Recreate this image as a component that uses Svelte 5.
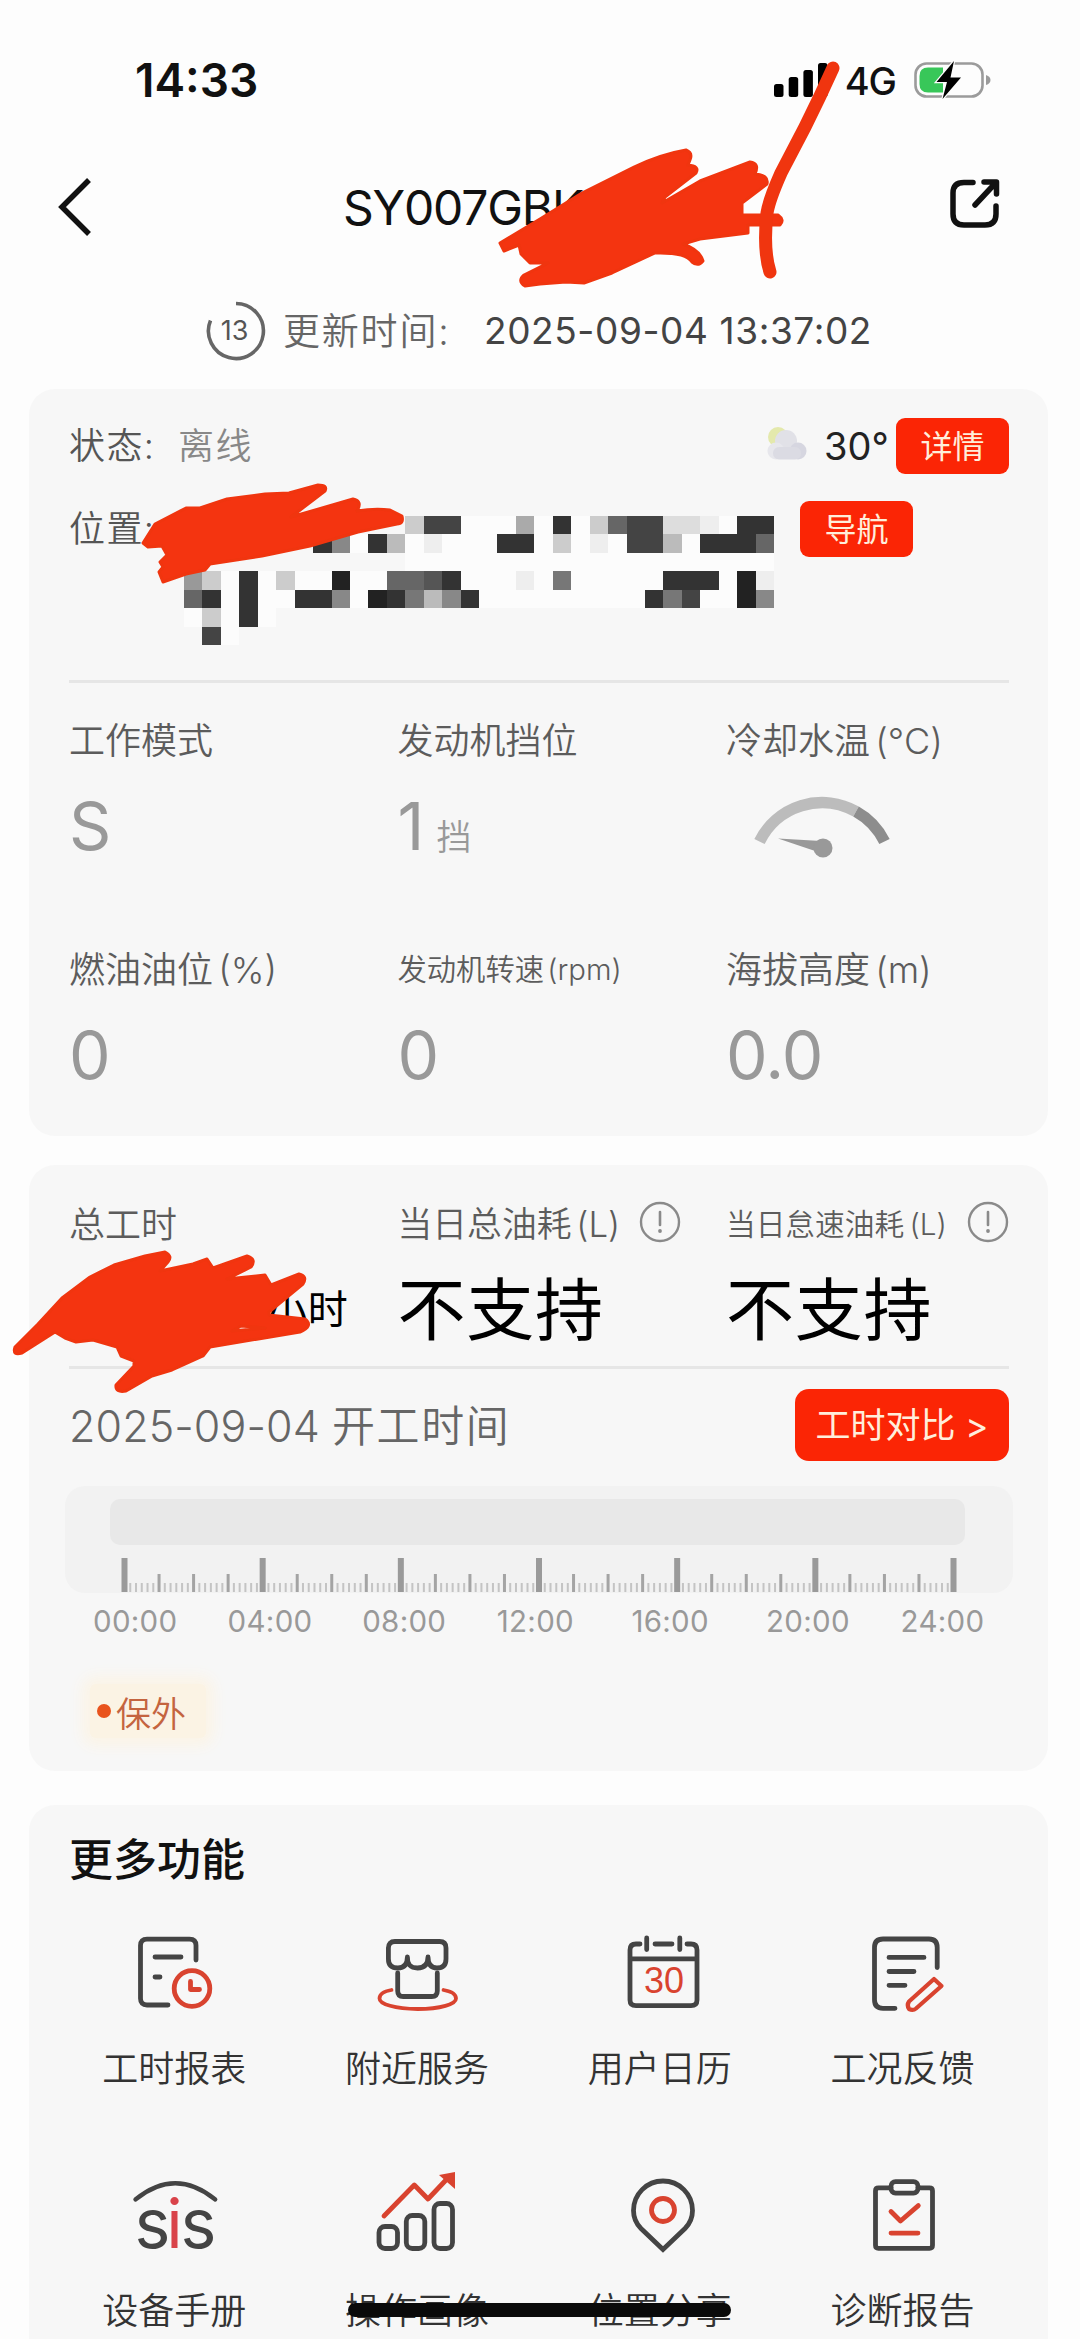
<script lang="ts">
	type Stat = { label: string; value?: string; unit?: string; small?: boolean; gauge?: boolean };

	const stats: Stat[] = [
		{ label: '工作模式', value: 'S' },
		{ label: '发动机挡位', value: '1', unit: '挡' },
		{ label: '冷却水温 (°C)', gauge: true },
		{ label: '燃油油位 (%)', value: '0' },
		{ label: '发动机转速 (rpm)', value: '0', small: true },
		{ label: '海拔高度 (m)', value: '0.0' }
	];

	const hours = ['00:00', '04:00', '08:00', '12:00', '16:00', '20:00', '24:00'];

	// one tick every ten minutes
	const ticks = Array.from({ length: 145 }, (_, i) => ({
		x: 59.5 + i * 5.757,
		size: i % 24 === 0 ? 'long' : i % 6 === 0 ? 'mid' : 'short'
	}));

	// masked address, one hex grey per cell
	const mosaic = [
		'............c44fffaf3fc644ddef33',
		'.......38f3bfefff33fcfef44bf3336',
		'............ffffffffffffffffffff',
		'9cf3fcff2ff6653fffef7fffff333f2e',
		'63f3ff338f237b83fffffffff374ff28',
		'fcf3f...........................',
		'.4f.............................'
	];

	function shade(cell: string) {
		if (cell === '.') return 'transparent';
		if (cell === 'f') return '#fcfcfc';
		return '#' + cell.repeat(3);
	}

	const features = [
		{ id: 'report', label: '工时报表' },
		{ id: 'store', label: '附近服务' },
		{ id: 'calendar', label: '用户日历' },
		{ id: 'feedback', label: '工况反馈' },
		{ id: 'sis', label: '设备手册' },
		{ id: 'chart', label: '操作画像' },
		{ id: 'pin', label: '位置分享' },
		{ id: 'clipboard', label: '诊断报告' }
	];
</script>

{#snippet info()}
	<svg class="info" width="42" height="42" viewBox="0 0 42 42">
		<circle cx="21" cy="21" r="19" fill="none" stroke="#8a8a8a" stroke-width="2.4" />
		<path d="M21 11v13" stroke="#8a8a8a" stroke-width="2.6" stroke-linecap="round" />
		<circle cx="21" cy="30" r="1.9" fill="#8a8a8a" />
	</svg>
{/snippet}

<div class="page">
	<div class="status-bar">
		<span class="clock">14:33</span>
		<div class="indicators">
			<svg width="54" height="36" viewBox="0 0 54 36">
				<rect x="0" y="22" width="9.5" height="13" rx="2.5" />
				<rect x="14.7" y="15" width="9.5" height="20" rx="2.5" />
				<rect x="29.4" y="8" width="9.5" height="27" rx="2.5" />
				<rect x="44" y="1" width="9.5" height="34" rx="2.5" />
			</svg>
			<span class="network">4G</span>
			<svg width="78" height="40" viewBox="0 0 78 40">
				<rect x="1.5" y="3.5" width="67" height="33" rx="11" fill="none" stroke="#9b9b9b" stroke-width="2.6" />
				<path d="M14 7.5h15v25h-15q-8.500 0-8.500-8.500v-8q0-8.500 8.500-8.500z" fill="#38c759" />
				<path d="M40 1 22.500 22h10.500l-4.500 17L47 17.500H36.500z" fill="#000" stroke="#fdfdfd" stroke-width="2.500" paint-order="stroke" />
				<path d="M72 15q4.500 1.500 4.500 5t-4.500 5z" fill="#9b9b9b" />
			</svg>
		</div>
	</div>

	<header>
		<svg width="40" height="62" viewBox="0 0 40 62">
			<path d="M34 4 7 31l27 27" fill="none" stroke="#111" stroke-width="5.5" />
		</svg>
		<h1>SY007GBK</h1>
		<svg width="52" height="52" viewBox="0 0 52 52" fill="none" stroke="#111" stroke-width="5.5" stroke-linecap="round" stroke-linejoin="round">
			<path d="M24 4.500H15Q4 4.500 4 15v21q0 11 11 11h21q11 0 11-11V28" />
			<path d="M35 4h12.500v12M47 4.500 26 27" />
		</svg>
	</header>

	<div class="update">
		<svg width="60" height="60" viewBox="0 0 60 60">
			<path d="M30 2.500A27.500 27.500 0 1 1 4.500 19.500" fill="none" stroke="#666" stroke-width="3.600" />
			<text x="28.500" y="38.500" text-anchor="middle">13</text>
		</svg>
		<span class="update-label">更新时间:</span>
		<span class="update-time">2025-09-04 13:37:02</span>
	</div>

	<section class="card machine">
		<div class="state">
			<span class="field">状态:</span>
			<span class="offline">离线</span>
			<svg class="weather" width="46" height="44" viewBox="0 0 46 44">
				<circle cx="15" cy="14" r="10" fill="#e0e69a" />
				<circle cx="23" cy="18" r="11" fill="#dcdce4" />
				<circle cx="13" cy="28" r="8.500" fill="#e4e4ea" />
				<circle cx="35" cy="28" r="8.500" fill="#cfcfdb" />
				<rect x="10" y="24" width="28" height="12.500" rx="6" fill="#d5d5df" />
			</svg>
			<span class="temp">30°</span>
			<button>详情</button>
		</div>
		<div class="address">
			<span class="field">位置:</span>
			<div class="mosaic">
				{#each mosaic as row}
					{#each row as cell}
						<i style="background: {shade(cell)}"></i>
					{/each}
				{/each}
			</div>
			<button>导航</button>
		</div>
		<hr />
		<div class="stats">
			{#each stats as stat}
				<div>
					<div class="label" class:small={stat.small}>{stat.label}</div>
					<div class="value">
						{#if stat.gauge}
							<svg class="gauge" width="144" height="70" viewBox="0 0 144 70" fill="none">
								<path d="M9.500 50.500A69.600 69.600 0 0 1 106 20.500" stroke="#bcbcbc" stroke-width="11.500" />
								<path d="M106 20.500A69.600 69.600 0 0 1 134.500 50.500" stroke="#8d8d8d" stroke-width="11.500" />
								<path d="M28 47.500 71 50v12z" fill="#999" />
								<circle cx="73" cy="57" r="9.500" fill="#999" />
							</svg>
						{:else}
							{stat.value}{#if stat.unit}<small>{stat.unit}</small>{/if}
						{/if}
					</div>
				</div>
			{/each}
		</div>
	</section>

	<section class="card work">
		<div class="totals">
			<div>
				<div class="label">总工时</div>
				<div class="total hours">小时</div>
			</div>
			<div>
				<div class="label fuel">当日总油耗 (L){@render info()}</div>
				<div class="total">不支持</div>
			</div>
			<div>
				<div class="label small">当日怠速油耗 (L){@render info()}</div>
				<div class="total">不支持</div>
			</div>
		</div>
		<hr />
		<div class="work-head">
			<div>2025-09-04 <span>开工时间</span></div>
			<button class="compare">工时对比 &gt;</button>
		</div>
		<div class="timeline">
			<div class="bar"></div>
			<svg width="948" height="34" viewBox="0 0 948 34">
				{#each ticks as tick}
					{#if tick.size === 'long'}
						<rect x={tick.x - 3} y="0" width="6" height="34" fill="#9a9a9a" />
					{:else if tick.size === 'mid'}
						<rect x={tick.x - 1.5} y="16" width="3" height="18" fill="#a4a4a4" />
					{:else}
						<rect x={tick.x - 1} y="25" width="2" height="9" fill="#c4c4c4" />
					{/if}
				{/each}
			</svg>
		</div>
		<div class="scale">
			{#each hours as hour}
				<span>{hour}</span>
			{/each}
		</div>
		<div class="tag"><i></i>保外</div>
	</section>

	<section class="card more">
		<h2>更多功能</h2>
		<div class="features">
			{#each features as feature}
				<div class="feature">
					<svg width="84" height="84" viewBox="0 0 84 84" fill="none" stroke="#444" stroke-width="4.800" stroke-linecap="round" stroke-linejoin="round">
						{#if feature.id === 'report'}
							<path d="M36 75H15q-6.500 0-6.500-6.500v-53Q8.500 9.200 15 9.200h42.500Q64 9.200 64 15.500V30" />
							<path d="M23 27h26M23 47h5" />
							<g class="red">
								<circle cx="60" cy="58.500" r="17.800" />
								<path d="M58.500 51.500v8h9" />
							</g>
						{:else if feature.id === 'store'}
							<path d="M13.400 18q0-6.500 6.500-6.500h44.600q6.500 0 6.500 6.500v11q0 9-9 9t-9-11q0 11-10.500 11t-10.100-11q0 11-9.500 11t-9.500-9z" />
							<path d="M22.700 43v18q0 5.500 5.500 5.500h28.600q5.500 0 5.500-5.500V43" />
							<path class="red" stroke-width="3.800" d="M16.500 60C8 61.500 4.500 65 4.500 68.400 4.500 74 20 79 42.700 79S81 74 81 68.400C81 65 77 61.500 68.500 60" />
						{:else if feature.id === 'calendar'}
							<path d="M22 14h-4q-6 0-6 6v50q0 5.600 6 5.600h55q6 0 6-5.600V20q0-6-6-6h-4M37 14h17M12 28.800h67M28.700 8v11.500M61.800 8v11.500" />
							<text class="day" x="46" y="63" text-anchor="middle">30</text>
						{:else if feature.id === 'feedback'}
							<path d="M34 78.300H22q-8.500 0-8.500-8.500V17.500Q13.500 9 22 9h46q8.200 0 8.200 8.500v20" />
							<path d="M28 27.400h35M28 41.500h25M28 55.300h16" />
							<path class="red" d="M73 49 48 71.500Q45.500 75 48 79q4 2 7-.500L80.500 56z" stroke-width="4.200" />
						{:else if feature.id === 'sis'}
							<path d="M3.400 27.500Q43.300-5 83.300 27.500" stroke-width="4.200" />
							<text class="sis" x="2.500" y="76">s</text>
							<text class="sis i" x="42.500" y="76" text-anchor="middle">i</text>
							<text class="sis" x="48.500" y="76">s</text>
						{:else if feature.id === 'chart'}
							<rect x="4" y="54.500" width="18.500" height="22" rx="6" />
							<rect x="31.300" y="43.500" width="18.500" height="33" rx="6" />
							<rect x="59" y="31.500" width="18.500" height="45" rx="6" />
							<path class="red" d="M9 44 39.300 13 53 27 71 8" />
							<path class="arrow" d="M64 3 80 0v17z" />
						{:else if feature.id === 'pin'}
							<path d="M45 77.500 23 56.500C18 51.500 15.500 46 15.500 38.500a29.500 29.500 0 0 1 59 0c0 7.500-2.500 13-7.500 18z" stroke-linejoin="miter" />
							<circle class="red" cx="45" cy="38" r="11.500" />
						{:else}
							<path d="M30 15.800H17.500q-3 0-3 3v54.500q0 3 3 3h51q3 0 3-3V18.800q0-3-3-3H57" />
							<rect x="30" y="9.600" width="27" height="11.500" rx="4.500" />
							<path class="red" d="M30 39.500 39.500 49 57.300 33.600M30 61.100h27" />
						{/if}
					</svg>
					<span>{feature.label}</span>
				</div>
			{/each}
		</div>
	</section>

	<svg class="marker" width="1080" height="2339" viewBox="0 0 1080 2339">
		<path d="M500 243 540 219 582 193 634 167Q662 154 686 150 693 153 690 160L688 165Q700 166 696 173L665 197 662 203 700 181 750 162Q760 163 755 174 769 175 767 184L742 203V215H778Q785 220 780 225H748V233L700 239 683 244Q700 250 703 261 698 267 692 262 686 252 655 253L612 273 584 283 566 282 540 284 525 286Q517 281 524 275L548 263H530L521 254 519 245 504 251z" />
		<path class="line" d="M833 68Q820 97 805 127 793 150 781 173 769 200 767 213 763 250 770 272" />
		<path d="M143 543 155 524 186 508H200L227 499 265 494 289 493 318 485Q328 485 325 491L291 517 353 499Q363 501 357 511 375 508 390 510L402 516Q404 524 397 524L358 532 310 546 262 556 210 564 205 570 186 574 163 582 159 572 163 567 160 562 167 555 162 546 148 547z" />
		<path fill-rule="evenodd" d="M15 1347 38 1324 62 1298 90 1277 114 1265 145 1256 165 1252Q173 1256 168 1262L160 1271 193 1264 207 1259 213 1268 247 1256Q257 1259 251 1267L227 1279 265 1275 271 1285 299 1274Q308 1276 303 1284L269 1312V1315L305 1319Q314 1326 300 1332L210 1347 203 1356 172 1370 152 1376 126 1391Q115 1393 116 1385L134 1366V1361L121 1356 117 1347 93 1340 76 1342 65 1338 55 1332 22 1353Q12 1356 15 1347zM232 1331 265 1328 241 1326z" />
	</svg>
	<div class="home-indicator"></div>
</div>

<style>
	:global(body) {
		margin: 0;
		background: #fdfdfd;
	}

	.page {
		position: relative;
		width: 1080px;
		height: 2339px;
		overflow: hidden;
		background: #fdfdfd;
		color: #111;
		font-family: Inter, 'Noto Sans CJK SC', sans-serif;
	}

	.status-bar {
		height: 160px;
		padding: 0 88px 0 135px;
		box-sizing: border-box;
		display: flex;
		align-items: center;
		justify-content: space-between;
	}

	.clock {
		font-size: 46px;
		font-weight: 600;
	}

	.indicators {
		display: flex;
		align-items: center;
	}

	.network {
		margin: 2px 18px 0 17px;
		font-size: 38px;
		font-weight: 500;
		letter-spacing: -1px;
	}

	header {
		height: 94px;
		padding: 0 79px 0 55px;
		display: flex;
		align-items: center;
	}

	h1 {
		flex: 1;
		margin: 0 0 0 248px;
		font-size: 48px;
		font-weight: 400;
		letter-spacing: -1.2px;
	}

	header svg:last-child {
		margin-top: -6px;
	}

	.update {
		height: 90px;
		margin-top: 32px;
		padding-left: 206px;
		display: flex;
		align-items: center;
		font-size: 37px;
	}

	.update text {
		font-size: 27px;
		fill: #555;
	}

	.update-label {
		width: 201px;
		margin: -4px 0 0 17px;
		color: #666;
		font-weight: 350;
		letter-spacing: 1.8px;
	}

	.update-time {
		margin-top: -2px;
		color: #444;
		letter-spacing: 0.6px;
	}

	.card {
		width: 1019px;
		margin: 13px 0 0 29px;
		padding: 0 39px 0 40px;
		box-sizing: border-box;
		border-radius: 26px;
		background: #f7f7f7;
	}

	.machine {
		height: 747px;
		padding-top: 29px;
	}

	.state,
	.address {
		display: flex;
		font-size: 36px;
		line-height: 57px;
	}

	.address {
		margin-top: 26px;
		align-items: flex-start;
	}

	.field {
		width: 109px;
		color: #555;
		font-weight: 350;
		letter-spacing: 1.4px;
	}

	.address .field {
		width: 115px;
	}

	.offline {
		color: #888;
		font-weight: 350;
		letter-spacing: 1.4px;
	}

	.weather {
		margin: 5px 15px 0 auto;
		opacity: 0.8;
	}

	.temp {
		width: 72px;
		color: #222;
		font-size: 38px;
		white-space: nowrap;
	}

	button {
		width: 113px;
		height: 56px;
		padding: 0;
		border: none;
		border-radius: 9px;
		background: #fb2505;
		color: #ffeedb;
		font-family: inherit;
		font-size: 32px;
		line-height: 55px;
	}

	.mosaic {
		width: 590px;
		margin: 15px 26px 0 0;
		display: grid;
		grid-template-columns: repeat(32, 1fr);
		grid-auto-rows: 18.45px;
	}

	hr {
		height: 3px;
		margin: 35px 0 0;
		border: none;
		background: #e6e6e6;
	}

	.stats,
	.totals {
		display: grid;
		grid-template-columns: 328.5px 328.5px auto;
	}

	.stats {
		row-gap: 76px;
		padding-top: 30px;
	}

	.label {
		height: 50px;
		display: flex;
		align-items: center;
		color: #5c5c5c;
		font-size: 36px;
		font-weight: 350;
		white-space: pre;
		word-spacing: -5px;
	}

	.label.small {
		font-size: 29.3px;
	}

	.value {
		height: 80px;
		margin-top: 23px;
		color: #999;
		font-size: 66px;
		font-weight: 400;
		letter-spacing: -0.8px;
		line-height: 80px;
	}

	.value small {
		margin-left: 13px;
		font-size: 35px;
		font-weight: 350;
	}

	.gauge {
		display: block;
		margin-left: 24px;
		padding-top: 5px;
	}

	.work {
		height: 606px;
		margin-top: 29px;
		padding-top: 32px;
	}

	.label.fuel {
		font-size: 34.8px;
	}

	.work .label.small {
		font-size: 29.7px;
		word-spacing: -3px;
	}

	.info {
		margin-left: auto;
		margin-right: 45px;
	}

	.totals > div:last-child .info {
		margin-right: 0;
	}

	.total {
		height: 80px;
		margin-top: 23px;
		color: #000;
		font-size: 68px;
		letter-spacing: 0.8px;
		line-height: 80px;
	}

	.hours {
		padding-left: 198px;
		font-size: 40px;
	}

	.work hr {
		margin-top: 16px;
	}

	.work-head {
		height: 72px;
		margin-top: 20px;
		display: flex;
		align-items: center;
		justify-content: space-between;
		color: #666;
		font-size: 43px;
		font-weight: 350;
	}

	.work-head div {
		margin-top: -4px;
		letter-spacing: 0.1px;
	}

	.work-head span {
		letter-spacing: 1.6px;
	}

	.compare {
		width: 214px;
		height: 72px;
		border-radius: 14px;
		font-size: 35px;
		line-height: 71px;
	}

	.timeline {
		width: 948px;
		height: 107px;
		margin: 25px 0 0 -4px;
		border-radius: 20px;
		background: #f2f2f2;
	}

	.timeline .bar {
		height: 46px;
		margin: 0 48px 13px 45px;
		border-radius: 10px;
		background: #e8e8e8;
		position: relative;
		top: 13px;
	}

	.timeline svg {
		display: block;
		padding-top: 13px;
	}

	.scale {
		height: 30px;
		margin: 13px 0 0 24px;
		display: grid;
		grid-template-columns: repeat(7, 134.6px);
		color: #999;
		font-size: 29.5px;
		letter-spacing: 0.3px;
		line-height: 30px;
	}

	.tag {
		width: 116px;
		height: 54px;
		margin: 48px 0 0 21px;
		display: flex;
		align-items: center;
		gap: 5px;
		border-radius: 6px;
		background: #fbf3e4;
		box-shadow: 0 0 14px 8px #fbf4e7;
		color: #c4643f;
		font-size: 35px;
		font-weight: 350;
	}

	.tag i {
		width: 14px;
		height: 14px;
		margin-left: 7px;
		border-radius: 50%;
		background: #e9531c;
	}

	.more {
		height: 580px;
		margin-top: 34px;
		padding: 25px 24px 0 24px;
	}

	h2 {
		margin: 0 0 0 16px;
		font-size: 44px;
		font-weight: 500;
		line-height: 60px;
	}

	.features {
		margin-top: 40px;
		display: grid;
		grid-template-columns: repeat(4, 1fr);
		row-gap: 78px;
	}

	.feature {
		display: flex;
		flex-direction: column;
		align-items: center;
		gap: 30px;
		color: #333;
		font-size: 36px;
		font-weight: 350;
		line-height: 50px;
	}

	.feature svg {
		overflow: visible;
	}

	.red {
		stroke: #d9432f;
	}

	.arrow {
		fill: #d9432f;
		stroke: none;
	}

	.day,
	.sis {
		stroke: none;
	}

	.day {
		fill: #d9432f;
		font: 36px 'Liberation Sans', sans-serif;
	}

	.sis {
		fill: #444;
		font-size: 68px;
		font-weight: 400;
	}

	.sis.i {
		fill: #d9434a;
	}

	.marker {
		position: absolute;
		top: 0;
		left: 0;
		fill: #f43410;
		stroke: #f0350f;
		stroke-width: 3;
		stroke-linejoin: round;
		stroke-linecap: round;
	}

	.marker .line {
		fill: none;
		stroke-width: 13;
	}

	.home-indicator {
		position: absolute;
		left: 348px;
		top: 2303px;
		width: 383px;
		height: 14px;
		border-radius: 7px;
		background: #0a0a0a;
	}
</style>
